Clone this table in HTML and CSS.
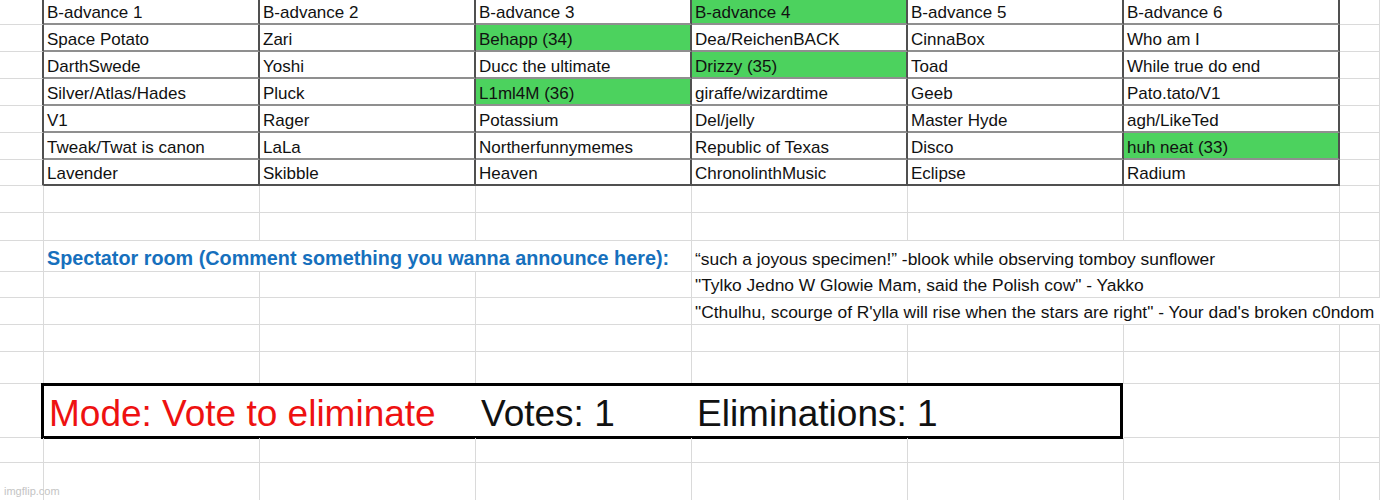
FILE: index.html
```html
<!DOCTYPE html>
<html>
<head>
<meta charset="utf-8">
<link rel="stylesheet" href="styles.css">
</head>
<body>
<div class="sheet">
  <div class="row h25 trow">
    <div class="c a"></div>
    <div class="c t">B-advance 1</div>
    <div class="c t">B-advance 2</div>
    <div class="c t">B-advance 3</div>
    <div class="c t g">B-advance 4</div>
    <div class="c t">B-advance 5</div>
    <div class="c t">B-advance 6</div>
    <div class="c"></div>
  </div>
  <div class="row h27 trow">
    <div class="c a"></div>
    <div class="c t">Space Potato</div>
    <div class="c t">Zari</div>
    <div class="c t g">Behapp (34)</div>
    <div class="c t">Dea/ReichenBACK</div>
    <div class="c t">CinnaBox</div>
    <div class="c t">Who am I</div>
    <div class="c"></div>
  </div>
  <div class="row h27 trow">
    <div class="c a"></div>
    <div class="c t">DarthSwede</div>
    <div class="c t">Yoshi</div>
    <div class="c t">Ducc the ultimate</div>
    <div class="c t g">Drizzy (35)</div>
    <div class="c t">Toad</div>
    <div class="c t">While true do end</div>
    <div class="c"></div>
  </div>
  <div class="row h27 trow">
    <div class="c a"></div>
    <div class="c t">Silver/Atlas/Hades</div>
    <div class="c t">Pluck</div>
    <div class="c t g">L1ml4M (36)</div>
    <div class="c t">giraffe/wizardtime</div>
    <div class="c t">Geeb</div>
    <div class="c t">Pato.tato/V1</div>
    <div class="c"></div>
  </div>
  <div class="row h27 trow">
    <div class="c a"></div>
    <div class="c t">V1</div>
    <div class="c t">Rager</div>
    <div class="c t">Potassium</div>
    <div class="c t">Del/jelly</div>
    <div class="c t">Master Hyde</div>
    <div class="c t">agh/LikeTed</div>
    <div class="c"></div>
  </div>
  <div class="row h27 trow">
    <div class="c a"></div>
    <div class="c t">Tweak/Twat is canon</div>
    <div class="c t">LaLa</div>
    <div class="c t">Northerfunnymemes</div>
    <div class="c t">Republic of Texas</div>
    <div class="c t">Disco</div>
    <div class="c t g">huh neat (33)</div>
    <div class="c"></div>
  </div>
  <div class="row h26 trow last">
    <div class="c a"></div>
    <div class="c t">Lavender</div>
    <div class="c t">Skibble</div>
    <div class="c t">Heaven</div>
    <div class="c t">ChronolinthMusic</div>
    <div class="c t">Eclipse</div>
    <div class="c t">Radium</div>
    <div class="c"></div>
  </div>
  <div class="row h27">
    <div class="c"></div><div class="c"></div><div class="c"></div><div class="c"></div>
    <div class="c"></div><div class="c"></div><div class="c"></div><div class="c"></div>
  </div>
  <div class="row h28">
    <div class="c"></div><div class="c"></div><div class="c"></div><div class="c"></div>
    <div class="c"></div><div class="c"></div><div class="c"></div><div class="c"></div>
  </div>
  <div class="row h31">
    <div class="c"></div>
    <div class="c span-bd spectator">Spectator room (Comment something you wanna announce here):</div>
    <div class="c span-eg quote">“such a joyous specimen!” -blook while observing tomboy sunflower</div>
    <div class="c"></div>
  </div>
  <div class="row h26">
    <div class="c"></div><div class="c"></div><div class="c"></div><div class="c"></div>
    <div class="c span-eg quote">"Tylko Jedno W Glowie Mam, said the Polish cow" - Yakko</div>
    <div class="c"></div>
  </div>
  <div class="row h27">
    <div class="c"></div><div class="c"></div><div class="c"></div><div class="c"></div>
    <div class="c span-eh quote">"Cthulhu, scourge of R'ylla will rise when the stars are right" - Your dad's broken c0ndom</div>
  </div>
  <div class="row h27">
    <div class="c"></div><div class="c"></div><div class="c"></div><div class="c"></div>
    <div class="c"></div><div class="c"></div><div class="c"></div><div class="c"></div>
  </div>
  <div class="row h32">
    <div class="c"></div><div class="c"></div><div class="c"></div><div class="c"></div>
    <div class="c"></div><div class="c"></div><div class="c"></div><div class="c"></div>
  </div>
  <div class="row h54">
    <div class="c"></div>
    <div class="status">
      <div class="st mode">Mode: Vote to eliminate</div>
      <div class="st">Votes: 1</div>
      <div class="st">Eliminations: 1</div>
    </div>
    <div class="c"></div><div class="c"></div>
  </div>
  <div class="row h25">
    <div class="c"></div><div class="c"></div><div class="c"></div><div class="c"></div>
    <div class="c"></div><div class="c"></div><div class="c"></div><div class="c"></div>
  </div>
  <div class="row h40">
    <div class="c"></div><div class="c"></div><div class="c"></div><div class="c"></div>
    <div class="c"></div><div class="c"></div><div class="c"></div><div class="c"></div>
  </div>
</div>
<div class="watermark">imgflip.com</div>
</body>
</html>
```

FILE: styles.css
```css
html, body {
  margin: 0;
  padding: 0;
  background: #ffffff;
  overflow: hidden;
}

body {
  width: 1380px;
  height: 500px;
  position: relative;
  font-family: "Liberation Sans", Arial, sans-serif;
  color: #111111;
}

.sheet {
  display: flex;
  flex-direction: column;
}

.row {
  display: grid;
  grid-template-columns: 44px repeat(6, 216px) 1fr;
}

.h25 { height: 25px; }
.h26 { height: 26px; }
.h27 { height: 27px; }
.h28 { height: 28px; }
.h31 { height: 31px; }
.h32 { height: 32px; }
.h40 { height: 40px; }
.h54 { height: 54px; }

.c {
  box-sizing: border-box;
  border-right: 1px solid #dadada;
  border-bottom: 1px solid #dadada;
  display: flex;
  align-items: flex-end;
  padding: 0 3px 0 3px;
  font-size: 17px;
  line-height: 20px;
  white-space: nowrap;
  min-width: 0;
}

.trow .a {
  border-right: 2px solid #505050;
}

.trow .t {
  border-right: 2px solid #505050;
  border-bottom: 2px solid #8f8f8f;
}

.trow.last .t {
  border-bottom: 2px solid #505050;
}

.g {
  background: #4cd25e;
}

.span-bd {
  grid-column: 2 / 5;
}

.span-eg {
  grid-column: 5 / 8;
}

.span-eh {
  grid-column: 5 / 9;
  border-right: none;
}

.spectator {
  color: #1670bd;
  font-weight: bold;
  font-size: 19.8px;
  line-height: 24px;
  padding-bottom: 1px;
}

.quote {
  font-size: 17.4px;
  padding-bottom: 2px;
}

.status {
  grid-column: 2 / 7;
  display: grid;
  grid-template-columns: 432px 216px 1fr;
  border: 3px solid #000000;
  margin: -1px 1px -1px -3px;
  box-sizing: border-box;
}

.st {
  display: flex;
  align-items: flex-end;
  padding: 0 0 2px 5px;
  font-size: 37px;
  line-height: 40px;
  white-space: nowrap;
  color: #111111;
}

.st.mode {
  color: #ee1111;
}

.watermark {
  position: absolute;
  left: 4px;
  bottom: 3px;
  font-size: 11px;
  color: #c4c4c4;
  font-family: "Liberation Sans", Arial, sans-serif;
}
```
